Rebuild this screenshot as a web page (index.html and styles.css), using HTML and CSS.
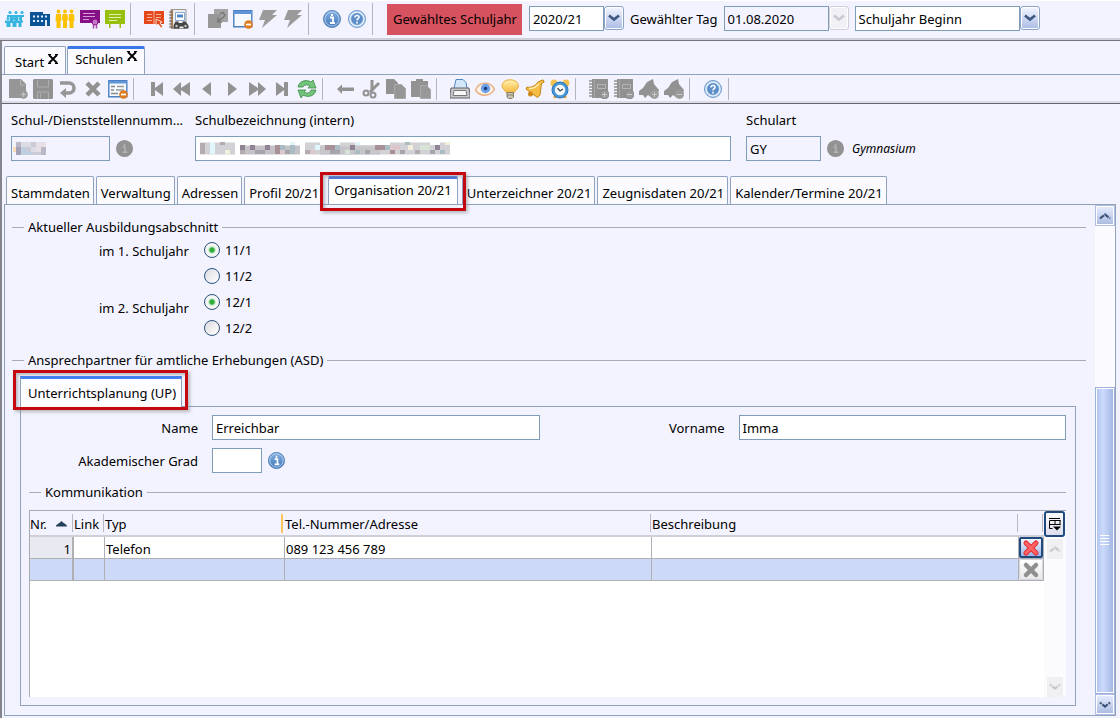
FILE: index.html
```html
<!DOCTYPE html>
<html lang="de">
<head>
<meta charset="utf-8">
<title>Schulen</title>
<link rel="stylesheet" href="styles.css">
</head>
<body>
<svg class="defs" aria-hidden="true">
  <defs>
    <linearGradient id="blue" x1="0" y1="0" x2="0" y2="1"><stop offset="0" stop-color="#86b0e0"/><stop offset="1" stop-color="#3f76b8"/></linearGradient>
    <linearGradient id="gold" x1="0" y1="0" x2="0" y2="1"><stop offset="0" stop-color="#fff3b0"/><stop offset="1" stop-color="#f7b63c"/></linearGradient>
    <symbol id="info" viewBox="0 0 20 20"><circle cx="10" cy="10" r="8.5" fill="url(#blue)" stroke="#5585bd"/><circle cx="10" cy="10" r="7" fill="none" stroke="#c5dbf3" stroke-width=".8"/><path d="M8 8.500h3v5M8 14h5M10 5v2" fill="none" stroke="#fff" stroke-width="1.800"/></symbol>
    <symbol id="help" viewBox="0 0 20 20"><circle cx="10" cy="10" r="8.500" fill="#a9c6e8" stroke="#6d9bd0"/><circle cx="10" cy="10" r="7" fill="none" stroke="#eef5fd" stroke-width="1.200"/><circle cx="10" cy="10" r="5.800" fill="#5c8fca"/><path d="M8 8.500c0-3 4.500-2.500 4 0-.3 1.300-2 1.200-2 3M10 12.800v1.700" fill="none" stroke="#fff" stroke-width="1.600"/></symbol>
    <symbol id="info-gray" viewBox="0 0 20 20"><circle cx="10" cy="10" r="9" fill="#929292"/><path d="M8 8.500h2.500v5M8 14h5M10 5v2" fill="none" stroke="#b5b5b5" stroke-width="1.600"/></symbol>
    <symbol id="people" viewBox="0 0 20 20"><g fill="#35b6e0"><circle cx="5" cy="3.500" r="1.600"/><circle cx="11" cy="3.500" r="1.600"/><circle cx="17" cy="3.500" r="1.600"/><path d="M2 6h17v2h-2v4h-2V8h-2v4h-3V8H8v4H5V8H2z"/><circle cx="3" cy="9.500" r="1.500"/><circle cx="9" cy="9.500" r="1.500"/><circle cx="15" cy="9.500" r="1.500"/><path d="M0 11.500h18v2h-1.500V18h-3v-4h-2v4h-4v-4h-2v4h-4v-4H0z"/></g></symbol>
    <symbol id="school" viewBox="0 0 20 20"><path d="M0 3h13v2h7v12H0z" fill="#0b5596"/><path d="M3 6.500h2v2H3zm4 0h2v2H7zm4 0h2v2h-2zm4 0h2v2h-2zM3 11h2v2H3zm4 0h2v2H7zm4 0h2v2h-2zm4 0h2v6h-2z" fill="#dfeaf5"/></symbol>
    <symbol id="staff" viewBox="0 0 20 20"><g fill="#fcc200"><circle cx="3.500" cy="2.500" r="1.900"/><circle cx="10" cy="2.500" r="1.900"/><circle cx="16.500" cy="2.500" r="1.900"/><path d="M1 5h5l.5 7h-1v7h-4v-7h-1zM7.500 5h5l.5 6h-1v8H8v-8H7zM14 5h5l.5 7h-1v7h-4v-7h-1z"/></g></symbol>
    <symbol id="cert" viewBox="0 0 20 20"><path d="M0 1h20v13H0z" fill="#861086"/><path d="M3 4.500h12M3 7.500h12M3 10.500h6" stroke="#d79bd7"/><circle cx="15" cy="13" r="3" fill="#c877c8" stroke="#861086"/><path d="M13.500 15.500v4M16.500 15.500v4" stroke="#a84aa8" stroke-width="1.500"/></symbol>
    <symbol id="board" viewBox="0 0 20 20"><path d="M0 1h20v14h-4v4h-1.500v-4H5.500v4H4v-4H0z" fill="#97bf0d"/><path d="M4 5.500h12M4 8.500h12M4 11.500h8" stroke="#e4f0b0"/></symbol>
    <symbol id="book" viewBox="0 0 20 20"><path d="M0 2l9 0 1 1 1-1 9 0v13H0z" fill="#e5481b"/><path d="M10 3v12M3 5.500h5M3 8.500h5M3 11.500h5M12 5.500h5M12 8.500h5" stroke="#f6b39d"/><path d="M12 10l6 3-2 1 3 4-2 1-3-4-2 2z" fill="#e5481b" stroke="#fff" stroke-width=".8"/></symbol>
    <symbol id="contacts" viewBox="0 0 20 20"><path d="M2 .5h15v19H2z" fill="#eee" stroke="#999"/><path d="M2 1h2v18H2z" fill="#b98450"/><path d="M0 3h4M0 6h4M0 9h4M0 12h4M0 15h4M0 18h4" stroke="#666"/><path d="M6.500 3.500h9v8h-9z" fill="#fff" stroke="#8aa9d3"/><path d="M8 5.500h6v3H8z" fill="#4d86c8"/><path d="M4.500 19.500v-3l2-4h3v1.500h4v-1.500h3l3 4v3h-5v-2h-4v2z" fill="#444"/><circle cx="7.500" cy="17" r="1.200" fill="#ccc"/><circle cx="16.500" cy="17" r="1.200" fill="#ccc"/></symbol>
    <symbol id="copies" viewBox="0 0 20 20"><path d="M6 0h14v13H6z" fill="#a4a4a4"/><path d="M0 5h13v14H0z" fill="#989898"/><path d="M12 4.500l3-1 2 3-3 3M14 9.500l-5 3M10 8.500v4.500h4" fill="none" stroke="#7c7c7c" stroke-width="1.600"/></symbol>
    <symbol id="window" viewBox="0 0 20 20"><path d="M.8 1.800h18v16H.8z" fill="#f6faff" stroke="#4b80c2" stroke-width="1.400"/><path d="M1 2h18v3H1z" fill="#5f95d6"/><circle cx="15.500" cy="15.500" r="4.300" fill="#e07b1e"/><path d="M13 15.500h5" stroke="#fff" stroke-width="1.800"/></symbol>
    <symbol id="form" viewBox="0 0 20 20"><path d="M.8 1.800h18v16H.8z" fill="#f6faff" stroke="#4b80c2" stroke-width="1.400"/><path d="M1 2h18v2.500H1z" fill="#5f95d6"/><path d="M3 7.500h4M3 11h3M3 14.500h7" stroke="#888" stroke-width="1.300"/><path d="M9 7.500h7M8 11h8" stroke="#999" stroke-width="1.300"/><circle cx="15.500" cy="15.500" r="4.300" fill="#e07b1e"/><path d="M13 15.500h5" stroke="#fff" stroke-width="1.800"/></symbol>
    <symbol id="bolt" viewBox="0 0 20 20"><path d="M5 1h14l-5 5h5L4 19l3-8H1z" fill="#9b9b9b"/></symbol>
    <symbol id="new" viewBox="0 0 20 20"><path d="M1 0h12l5 5v14H1z" fill="#969696"/><path d="M12.500 1v5H17" stroke="#b0b0b0" fill="none"/><circle cx="15.500" cy="15.500" r="4.300" fill="#999"/><path d="M13 15.500h5M15.500 13v5" stroke="#c4c4c4" stroke-width="1.200"/></symbol>
    <symbol id="save" viewBox="0 0 20 20"><path d="M0 1l1-1h18l1 1v18l-1 1H1l-1-1z" fill="#929292"/><path d="M4.500 1v7h11V1M4.500 20v-7h11v7M7.500 14v5" stroke="#aeaeae" fill="none"/></symbol>
    <symbol id="undo" viewBox="0 0 20 20"><path d="M2 4h9a4.500 4.500 0 0 1 0 10H6" fill="none" stroke="#969696" stroke-width="3.600"/><path d="M8 9v10l-6-5z" fill="#969696"/></symbol>
    <symbol id="cross" viewBox="0 0 20 20"><path d="M4 4l12 12M16 4L4 16" stroke="#929292" stroke-width="4.500"/></symbol>
    <symbol id="first" viewBox="0 0 20 20"><path d="M4 3h4v6l8-6v14l-8-6v6H4z" fill="#929292"/></symbol>
    <symbol id="rew" viewBox="0 0 20 20"><path d="M1 10l8-7v6l9-6v14l-9-6v6z" fill="#929292"/></symbol>
    <symbol id="prev" viewBox="0 0 20 20"><path d="M5 10l9-7v14z" fill="#929292"/></symbol>
    <symbol id="next" viewBox="0 0 20 20"><path d="M15 10L6 3v14z" fill="#929292"/></symbol>
    <symbol id="ffw" viewBox="0 0 20 20"><path d="M19 10l-8-7v6L2 3v14l9-6v6z" fill="#929292"/></symbol>
    <symbol id="last" viewBox="0 0 20 20"><path d="M16 3h-4v6L4 3v14l8-6v6h4z" fill="#929292"/></symbol>
    <symbol id="refresh" viewBox="0 0 20 20"><path d="M1 8c1-6 8-8 13-5l2-2 3 8h-8l2-2c-3-2-6-1-7 1zM19 11c-1 6-8 8-13 5l-2 3-3-8h8l-2 2c3 2 6 1 7-2z" fill="#74c47b" stroke="#3c8c46" stroke-width=".8"/></symbol>
    <symbol id="left" viewBox="0 0 20 20"><path d="M1 10l5-4.500v3h12v3.500H6v3z" fill="#929292"/></symbol>
    <symbol id="cut" viewBox="0 0 20 20"><path d="M11 1v10M18 4l-9 9" stroke="#929292" stroke-width="3"/><circle cx="5" cy="14" r="2.500" fill="none" stroke="#929292" stroke-width="2"/><circle cx="12" cy="16" r="2.500" fill="none" stroke="#929292" stroke-width="2"/></symbol>
    <symbol id="copy" viewBox="0 0 20 20"><path d="M0 0h8l4 4v11H0z" fill="#929292"/><path d="M8.500 5.500h7l4 4v10h-11z" fill="#969696" stroke="#aaa"/></symbol>
    <symbol id="paste" viewBox="0 0 20 20"><path d="M0 2h5V0h7v2h5v16H0z" fill="#929292"/><path d="M9.500 6.500h6l4 4v9h-10z" fill="#989898" stroke="#aaa"/></symbol>
    <symbol id="print" viewBox="0 0 20 20"><path d="M4 9.500L6 .5h7l3 3 1 6z" fill="#d3e8fb" stroke="#4f86c2"/><path d="M1 9h18l1 7v3H0v-3z" fill="#c9c9cd" stroke="#606064"/><path d="M4 11.500h12l1 5H3z" fill="#f7f7f7" stroke="#777"/></symbol>
    <symbol id="eye" viewBox="0 0 20 20"><path d="M.5 11C4 2.500 15 2 19.500 10c-4 8-15 8-19 1z" fill="#fdf2e8" stroke="#e8b387" stroke-width="1.600"/><circle cx="10.500" cy="9.500" r="4.700" fill="#6f9fe4"/><circle cx="10.500" cy="9.500" r="1.800" fill="#173c86"/></symbol>
    <symbol id="bulb" viewBox="0 0 20 20"><path d="M10 .8c5 0 8.500 2.700 8.500 6 0 3.200-3 4-4.500 7H6.500c-1.500-3-4.500-3.800-4.500-7 0-3.300 3-6 8-6z" fill="url(#gold)" stroke="#eba83a"/><path d="M7 13.500h6.500v4.500l-1.500 1.500H8.500L7 18z" fill="#cbc6b4" stroke="#827c68"/><path d="M7 16h6.500" stroke="#827c68"/></symbol>
    <symbol id="bell" viewBox="0 0 20 20"><path d="M18 .8l1.200 2.200-2.700 1.500-1.500 11.500-2.500 2.500L1 10l1-2c4 1 8-1 11-5z" fill="#f5bd45" stroke="#c08415"/><circle cx="5.500" cy="15" r="2.500" fill="#d18a17"/><path d="M4 9.500c4 0 8-2 10-5" fill="none" stroke="#ffe9a4" stroke-width="1.500"/></symbol>
    <symbol id="alarm" viewBox="0 0 20 20"><circle cx="4" cy="4" r="3.500" fill="#f2c14e"/><circle cx="16" cy="4" r="3.500" fill="#f2c14e"/><path d="M4 19l3-4M16 19l-3-4" stroke="#e3a733" stroke-width="2.500"/><circle cx="10" cy="11" r="8" fill="#4a97d8" stroke="#2d74b8"/><circle cx="10" cy="11" r="5.200" fill="#f7fbff"/><path d="M10 12l-2.500-3M10 12l3-2" stroke="#444" stroke-width="1.200"/></symbol>
    <symbol id="note" viewBox="0 0 20 20"><path d="M3 0h16v19H3z" fill="#929292"/><path d="M0 2h4M0 5h4M0 8h4M0 11h4M0 14h4M0 17h4" stroke="#929292" stroke-width="1.600"/><path d="M8.500 5.500h8v4h-8z" stroke="#b4b4b4" fill="none"/><path d="M5.500 0v19" stroke="#a6a6a6"/></symbol>
    <symbol id="note-add" viewBox="0 0 20 20"><use href="#note"/><circle cx="15.500" cy="15.500" r="4.500" fill="#999" stroke="#888"/><path d="M13 15.500h5M15.500 13v5" stroke="#ccc"/></symbol>
    <symbol id="note-del" viewBox="0 0 20 20"><use href="#note"/><circle cx="15.500" cy="15.500" r="4.500" fill="#999" stroke="#888"/><path d="M13 15.500h5" stroke="#ccc"/></symbol>
    <symbol id="tag" viewBox="0 0 20 20"><path d="M8 3l6-3 1 5 5 6-2 8h-5l-4-3-3 3-2-3H0v-4l4-3z" fill="#929292"/><circle cx="15.500" cy="15.500" r="4" fill="#989898" stroke="#a4a4a4"/></symbol>
    <symbol id="tag-add" viewBox="0 0 20 20"><use href="#tag"/><path d="M13 15.500h5M15.500 13v5" stroke="#ccc"/></symbol>
    <symbol id="tag-del" viewBox="0 0 20 20"><use href="#tag"/><path d="M13 15.500h5" stroke="#ccc"/></symbol>
    <symbol id="chev" viewBox="0 0 12 8"><path d="M1 1.500L6 5.500l5-4" fill="none" stroke="currentColor" stroke-width="2.800"/></symbol>
    <symbol id="chev-up" viewBox="0 0 12 8"><path d="M1 6.500l5-4 5 4" fill="none" stroke="currentColor" stroke-width="2.200" stroke-dasharray="5 1"/></symbol>
    <symbol id="chev-down" viewBox="0 0 12 8"><path d="M1 1.500l5 4 5-4" fill="none" stroke="currentColor" stroke-width="2.200" stroke-dasharray="2 1 7 1"/></symbol>
  </defs>
</svg>

<header class="bar topbar">
  <div class="tools">
    <button class="tool" aria-label="Schüler"><svg><use href="#people"/></svg></button>
    <button class="tool" aria-label="Schulen"><svg><use href="#school"/></svg></button>
    <button class="tool" aria-label="Lehrkräfte"><svg><use href="#staff"/></svg></button>
    <button class="tool" aria-label="Zeugnisse"><svg><use href="#cert"/></svg></button>
    <button class="tool" aria-label="Unterricht"><svg><use href="#board"/></svg></button>
    <span class="sep"></span>
    <button class="tool" aria-label="Katalog"><svg><use href="#book"/></svg></button>
    <button class="tool" aria-label="Suche"><svg><use href="#contacts"/></svg></button>
    <span class="sep"></span>
    <button class="tool" aria-label="Fenster anordnen"><svg><use href="#copies"/></svg></button>
    <button class="tool" aria-label="Fenster schließen"><svg><use href="#window"/></svg></button>
    <button class="tool" aria-label="Aktion 1"><svg><use href="#bolt"/></svg></button>
    <button class="tool" aria-label="Aktion 2"><svg><use href="#bolt"/></svg></button>
    <span class="sep"></span>
    <button class="tool" aria-label="Info"><svg><use href="#info"/></svg></button>
    <button class="tool" aria-label="Hilfe"><svg><use href="#help"/></svg></button>
    <span class="sep"></span>
  </div>
  <label class="year-label" for="year">Gewähltes Schuljahr</label>
  <div class="combo combo-year">
    <select id="year"><option>2020/21</option></select>
    <span class="drop"><svg><use href="#chev"/></svg></span>
  </div>
  <label class="day-label" for="day">Gewählter Tag</label>
  <div class="combo combo-day">
    <input id="day" type="text" value="01.08.2020" readonly>
    <button class="drop drop-off" aria-label="Datum wählen" disabled><svg><use href="#chev"/></svg></button>
  </div>
  <div class="combo combo-start">
    <select aria-label="Stichtag"><option>Schuljahr Beginn</option></select>
    <span class="drop"><svg><use href="#chev"/></svg></span>
  </div>
</header>

<main class="frame">
  <nav class="doc-tabs">
    <div class="doc-tab"><button class="tab-name">Start</button><button class="close" aria-label="Start schließen"><svg viewBox="0 0 12 12"><path d="M2 2l8 8M10 2l-8 8" stroke="#000" stroke-width="1.800"/><path d="M1 1.500h3M8 1.500h3M1 10.500h3M8 10.500h3" stroke="#000"/></svg></button></div>
    <div class="doc-tab doc-tab-on"><button class="tab-name">Schulen</button><button class="close" aria-label="Schulen schließen"><svg viewBox="0 0 12 12"><path d="M2 2l8 8M10 2l-8 8" stroke="#000" stroke-width="1.800"/><path d="M1 1.500h3M8 1.500h3M1 10.500h3M8 10.500h3" stroke="#000"/></svg></button></div>
  </nav>

  <div class="bar subbar">
    <button class="tool" aria-label="Neu"><svg><use href="#new"/></svg></button>
    <button class="tool" aria-label="Speichern"><svg><use href="#save"/></svg></button>
    <button class="tool" aria-label="Rückgängig"><svg><use href="#undo"/></svg></button>
    <button class="tool" aria-label="Löschen"><svg><use href="#cross"/></svg></button>
    <button class="tool" aria-label="Maske schließen"><svg><use href="#form"/></svg></button>
    <span class="sep"></span>
    <button class="tool" aria-label="Erster"><svg><use href="#first"/></svg></button>
    <button class="tool" aria-label="Seite zurück"><svg><use href="#rew"/></svg></button>
    <button class="tool" aria-label="Zurück"><svg><use href="#prev"/></svg></button>
    <button class="tool" aria-label="Weiter"><svg><use href="#next"/></svg></button>
    <button class="tool" aria-label="Seite vor"><svg><use href="#ffw"/></svg></button>
    <button class="tool" aria-label="Letzter"><svg><use href="#last"/></svg></button>
    <button class="tool" aria-label="Aktualisieren"><svg><use href="#refresh"/></svg></button>
    <span class="sep"></span>
    <button class="tool" aria-label="Zurückgehen"><svg><use href="#left"/></svg></button>
    <button class="tool" aria-label="Ausschneiden"><svg><use href="#cut"/></svg></button>
    <button class="tool" aria-label="Kopieren"><svg><use href="#copy"/></svg></button>
    <button class="tool" aria-label="Einfügen"><svg><use href="#paste"/></svg></button>
    <span class="sep"></span>
    <button class="tool" aria-label="Drucken"><svg><use href="#print"/></svg></button>
    <button class="tool" aria-label="Ansicht"><svg><use href="#eye"/></svg></button>
    <button class="tool" aria-label="Hinweis"><svg><use href="#bulb"/></svg></button>
    <button class="tool" aria-label="Erinnerung"><svg><use href="#bell"/></svg></button>
    <button class="tool" aria-label="Wiedervorlage"><svg><use href="#alarm"/></svg></button>
    <span class="sep"></span>
    <button class="tool" aria-label="Notiz anlegen"><svg><use href="#note-add"/></svg></button>
    <button class="tool" aria-label="Notiz entfernen"><svg><use href="#note-del"/></svg></button>
    <button class="tool" aria-label="Markierung anlegen"><svg><use href="#tag-add"/></svg></button>
    <button class="tool" aria-label="Markierung entfernen"><svg><use href="#tag-del"/></svg></button>
    <span class="sep"></span>
    <button class="tool" aria-label="Hilfe zur Maske"><svg><use href="#help"/></svg></button>
    <span class="sep"></span>
  </div>

  <section class="record">
    <div class="head-cell">
      <label class="head-label" for="nr">Schul-/Dienststellennumm...</label>
      <div class="head-row">
        <div class="masked masked-nr">
          <input id="nr" class="field field-off" type="text" readonly>
          <svg class="mosaic" width="34" height="13" viewBox="0 0 34 13"><path fill="#fbdcb8" d="M0 5h3v5H0z"/><path fill="#b9b7c8" d="M3 0h5v5H3zM28 5h5v8h-5z"/><path fill="#a5a2b5" d="M3 5h5v8H3z"/><path fill="#dcdce4" d="M8 0h10v5H8zM18 5h5v5h-5z"/><path fill="#bdd0e2" d="M8 5h5v8H8zM13 10h5v3h-5z"/><path fill="#c9cbd9" d="M13 5h5v5h-5zM18 0h5v5h-5zM18 10h10v3H18z"/><path fill="#e6dfe6" d="M23 0h5v10h-5zM28 0h5v5h-5z"/></svg>
        </div>
        <svg class="round"><use href="#info-gray"/></svg>
      </div>
    </div>
    <div class="head-cell">
      <label class="head-label" for="name-intern">Schulbezeichnung (intern)</label>
      <div class="masked">
        <input id="name-intern" class="field" type="text">
        <svg class="mosaic" width="250" height="13" viewBox="0 0 250 13">
          <path stroke="#d2d1d5" stroke-width="12" d="M0 6.500h35M105 6.500h145"/><path stroke="#c6c6ca" stroke-width="8" d="M120 8.500h60"/>
          <path stroke="#c4c2c6" stroke-width="9" d="M40 8h60"/>
          <path fill="#fff" d="M120 0h20v3h-20zM160 0h30v3h-30zM230 0h10v3h-10z"/>
          <path fill="#b3abb0" d="M0 1h5v11H0zM20 0h5v3h-5zM40 8h5v4h-5zM105 8h5v4h-5zM215 8h5v4h-5z"/>
          <path fill="#8f8494" d="M40 3h5v5h-5zM50 3h5v5h-5zM65 3h5v5h-5zM150 3h5v5h-5zM235 3h5v5h-5z"/>
          <path fill="#a79098" d="M75 3h5v9h-5zM125 3h10v5h-10zM175 3h10v5h-10zM190 8h5v4h-5z"/>
          <path fill="#dcc7cc" d="M10 3h5v5h-5zM60 8h5v4h-5zM80 8h5v4h-5zM190 3h10v5h-10zM110 8h5v4h-5z"/>
          <path fill="#e0f6fb" d="M10 0h5v12h-5zM115 3h5v5h-5zM155 0h5v3h-5zM90 0h5v3h-5z"/>
          <path fill="#a9bcc4" d="M80 3h5v5h-5zM90 3h5v9h-5zM135 3h5v5h-5zM155 8h5v4h-5zM185 3h5v5h-5zM205 0h5v3h-5zM240 8h5v4h-5z"/>
          <path fill="#d7e3d5" d="M145 8h5v4h-5zM220 3h10v5h-10z"/>
          <path fill="#f3efdf" d="M25 8h5v4h-5zM208 3h5v5h-5zM245 0h5v3h-5z"/>
          <path fill="#a6a3aa" d="M55 8h10v4H55zM85 8h5v4h-5zM130 8h10v4h-10zM165 8h5v4h-5zM200 8h5v4h-5zM230 8h5v4h-5z"/>
        </svg>
      </div>
    </div>
    <div class="head-cell">
      <label class="head-label" for="type">Schulart</label>
      <div class="head-row">
        <input id="type" class="field field-off field-type" type="text" value="GY" readonly>
        <svg class="round"><use href="#info-gray"/></svg>
        <em>Gymnasium</em>
      </div>
    </div>
  </section>

  <nav class="tabs">
    <button class="tab">Stammdaten</button>
    <button class="tab">Verwaltung</button>
    <button class="tab">Adressen</button>
    <button class="tab">Profil 20/21</button>
    <div class="mark"><button class="tab tab-on">Organisation 20/21</button></div>
    <button class="tab">Unterzeichner 20/21</button>
    <button class="tab">Zeugnisdaten 20/21</button>
    <button class="tab">Kalender/Termine 20/21</button>
  </nav>

  <div class="panel">
    <div class="content">
      <fieldset class="group">
        <legend>Aktueller Ausbildungsabschnitt</legend>
        <div class="years">
          <span class="years-label">im 1. Schuljahr</span>
          <div class="radios">
            <label><input type="radio" name="jahr1" checked>11/1</label>
            <label><input type="radio" name="jahr1">11/2</label>
          </div>
          <span class="years-label years-label-low">im 2. Schuljahr</span>
          <div class="radios">
            <label><input type="radio" name="jahr2" checked>12/1</label>
            <label><input type="radio" name="jahr2">12/2</label>
          </div>
        </div>
      </fieldset>

      <fieldset class="group section-contact">
        <legend>Ansprechpartner für amtliche Erhebungen (ASD)</legend>
        <div class="inner-tabs"><div class="mark mark-inner"><button class="inner-tab">Unterrichtsplanung (UP)</button></div></div>
        <div class="card">
          <div class="form">
            <label for="ln">Name</label>
            <input id="ln" class="field" type="text" value="Erreichbar">
            <label for="fn">Vorname</label>
            <input id="fn" class="field" type="text" value="Imma">
            <label for="grad">Akademischer Grad</label>
            <div class="grad"><input id="grad" class="field field-grad" type="text"><svg class="round"><use href="#info"/></svg></div>
          </div>
          <fieldset class="group section-comm">
            <legend>Kommunikation</legend>
            <div class="grid-box">
              <div class="grid-main">
                <table>
                  <colgroup><col class="c-nr"><col class="c-link"><col class="c-typ"><col><col><col class="c-del"></colgroup>
                  <thead>
                    <tr><th>Nr.<svg class="sort" viewBox="0 0 11 6"><path d="M0 5.500C0 3.500 2 3.500 5.500 0 9 3.500 11 3.500 11 5.500z" fill="#26415a"/></svg></th><th>Link</th><th class="drop-mark">Typ</th><th>Tel.-Nummer/Adresse</th><th>Beschreibung</th><th></th></tr>
                  </thead>
                  <tbody>
                    <tr><td class="nr">1</td><td></td><td>Telefon</td><td>089 123 456 789</td><td></td><td class="del"><button class="del-on" aria-label="Zeile löschen"><svg viewBox="0 0 18 18"><path d="M4 4l10 10M14 4L4 14" stroke="#e22b30" stroke-width="5" stroke-linecap="round"/><path d="M4 4l10 10M14 4L4 14" stroke="#ff6464" stroke-width="3" stroke-linecap="round"/></svg></button></td></tr>
                    <tr class="picked"><td class="nr"></td><td></td><td></td><td></td><td></td><td class="del"><button class="del-off" aria-label="Leere Zeile löschen" disabled><svg viewBox="0 0 18 18"><path d="M4 4l10 10M14 4L4 14" stroke="#8f8f8f" stroke-width="4.500" stroke-linecap="round"/></svg></button></td></tr>
                  </tbody>
                </table>
              </div>
              <div class="grid-side">
                <button class="columns" aria-label="Spalten wählen"><svg viewBox="0 0 14 14"><path d="M1 1.500h11M1.500 4v7.500h3M1.500 3.500h11M1.500 7.500h11M7 3v5M12 3v5" stroke="#000" fill="none"/><path d="M5 9.500h8l-4 4z"/></svg></button>
                <span class="mini"><svg><use href="#chev-up"/></svg></span>
                <span class="mini mini-end"><svg><use href="#chev-down"/></svg></span>
              </div>
            </div>
          </fieldset>
        </div>
      </fieldset>
    </div>
    <div class="scroll">
      <button class="scroll-btn" aria-label="Nach oben"><svg><use href="#chev-up"/></svg></button>
      <span class="scroll-track"></span>
      <span class="scroll-thumb"><svg viewBox="0 0 10 11"><path d="M0 .5h9M0 3.500h9M0 6.500h9M0 9.500h9" stroke="#fff"/></svg></span>
      <button class="scroll-btn" aria-label="Nach unten"><svg><use href="#chev-down"/></svg></button>
    </div>
  </div>
</main>
</body>
</html>
```

FILE: styles.css
```css
* { box-sizing: border-box; }

body {
  display: flex;
  flex-direction: column;
  min-height: 100vh;
  margin: 0;
  background: #f3f3ff;
  color: #000;
  font: 13px/18px "Noto Sans", "Open Sans", sans-serif;
}

button, input, select { font: inherit; color: inherit; margin: 0; }
button { padding: 0; border: 0; background: none; }
.defs { position: absolute; width: 0; height: 0; }

/* Toolbars */
.bar { display: flex; align-items: center; }
.topbar {
  height: 41px;
  padding: 0 0 3px 2px;
  border-top: 1px solid #fff;
  border-bottom: 1px solid #75757d;
  box-shadow: inset 0 -2px #cfcfda;
}
.tools { display: flex; align-items: center; }
.tool { display: grid; place-items: center; flex: none; width: 25px; height: 24px; }
.tool svg { width: 20px; height: 20px; }
.sep { flex: none; width: 1px; margin: 0 10px 0 3px; background: #b4b4bd; }
.topbar .sep { height: 32px; }
.subbar {
  height: 29px;
  padding-left: 3px;
  border-bottom: 1px solid #64646c;
  box-shadow: inset 0 -2px #dcdce8;
}
.subbar .sep { height: 22px; }

.year-label {
  margin-left: 4px;
  padding: 6px 5px 7px 6px;
  background: #d6525e;
  white-space: nowrap;
}
.combo { display: flex; height: 26px; }
.combo select, .combo input {
  flex: 1;
  min-width: 0;
  height: 25px;
  padding: 0 3px;
  border: 1px solid #7f9db9;
  border-radius: 0;
  background: #fff;
  appearance: none;
}
.combo input { background: #f3f3ff; }
.combo-year { width: 95px; margin-left: 7px; }
.combo-day { width: 125px; margin-left: 6px; }
.combo-start { width: 185px; margin-left: 6px; }
.day-label { margin-left: 6px; white-space: nowrap; }
.drop {
  display: grid;
  place-items: center;
  width: 20px;
  height: 24px;
  border: 1px solid #8ba2c6;
  border-radius: 3px;
  background: linear-gradient(#f4f7ff, #a9bbe6);
  box-shadow: inset 0 0 0 1px #fff;
  color: #3f5a80;
}
.drop svg { width: 12px; height: 8px; }
.drop-off { border-color: #cfcfdc; background: #f0f0f5; color: #c9c9d4; }

/* Document frame */
.frame {
  display: flex;
  flex: 1;
  flex-direction: column;
  border-left: 2px solid #85858f;
}
.doc-tabs {
  display: flex;
  gap: 1px;
  align-items: flex-end;
  height: 34px;
  padding-left: 2px;
  border-bottom: 1px solid #8fa3bf;
}
.doc-tab {
  display: flex;
  align-items: center;
  gap: 3px;
  height: 28px;
  padding: 2px 6px 0 10px;
  border: 1px solid #8fa3bf;
  border-bottom: 0;
  border-radius: 2px 2px 0 0;
  background: #fbfbff;
}
.doc-tab-on {
  padding: 0 6px 6px 7px;
  border-top: 3px solid #3a76e8;
}
.close { display: grid; width: 12px; height: 18px; }
.close svg { width: 12px; height: 12px; }

/* Record header */
.record {
  display: grid;
  grid-template-columns: 169px minmax(0, 536px) 1fr;
  gap: 15px;
  padding: 7px 9px 15px;
}
.head-cell { display: flex; flex-direction: column; gap: 7px; min-width: 0; }
.head-label { white-space: nowrap; }
.head-row { display: flex; align-items: center; gap: 5px; }
.field {
  width: 100%;
  height: 25px;
  padding: 0 3px;
  border: 1px solid #7f9db9;
  border-radius: 0;
  background: #fff;
  outline: 0;
}
.field-off { background: #f3f3ff; }
.field-type { width: 75px; }
.masked { position: relative; }
.masked-nr { width: 99px; }
.masked input { display: block; }
.mosaic { position: absolute; top: 6px; left: 5px; }
.masked-nr .mosaic { left: 2px; }
.round { flex: none; width: 19px; height: 19px; }
.head-row em { margin-left: 2px; font-size: 12px; }

/* Record tabs */
.tabs { display: flex; gap: 2px; align-items: flex-end; padding-left: 4px; }
.tab {
  height: 28px;
  padding: 4px 3px 0 4px;
  border: 1px solid #8fa3bf;
  border-bottom: 0;
  border-radius: 2px 2px 0 0;
  background: #fbfbff;
  white-space: nowrap;
}
.tab-on {
  padding: 0 5px 4px;
  border-top: 3px solid #4a76dc;
  background: #fff;
}
.mark { position: relative; margin: 0 2px 0 3px; }
.mark::after {
  content: "";
  position: absolute;
  inset: -4px -8px -7px;
  border: 3px solid #c40812;
  box-shadow: 2px 2px 3px #8888, inset 2px 2px 3px #8888;
  pointer-events: none;
}

/* Main panel */
.panel {
  display: flex;
  flex: 1;
  margin: 0 4px 2px 2px;
  border: 1px solid #8fa3bf;
}
.content { display: flex; flex: 1; flex-direction: column; min-width: 0; padding: 13px 9px 9px 7px; }
.group { min-width: 0; margin: 0; padding: 0; border: 0; border-top: 1px solid #a9a9b8; }
.group legend { margin-left: 12px; padding: 0 4px; }
.years { display: grid; grid-template-columns: 177px 1fr; column-gap: 15px; padding-top: 1px; }
.years-label { padding-top: 5px; text-align: right; }
.years-label-low { padding-top: 10px; }
.radios label { display: flex; align-items: center; gap: 5px; width: max-content; height: 26px; }
.radios input {
  width: 16px;
  height: 16px;
  border: 1px solid #2b5480;
  border-radius: 50%;
  background: linear-gradient(135deg, #dcdce0, #fff);
  appearance: none;
}
.radios input:checked { background: radial-gradient(circle, #2fae3a 0 2px, #9fdca2 3px, #f4f6f4 4px); }

.section-contact { display: flex; flex: 1; flex-direction: column; margin-top: 10px; }
.inner-tabs { display: flex; padding-left: 8px; margin-top: 7px; }
.mark-inner { margin: 0; }
.mark-inner::after { inset: -6px -6px -4px -7px; }
.inner-tab {
  position: relative;
  height: 31px;
  margin-bottom: -1px;
  padding: 0 5px 0 7px;
  border: 1px solid #8fa3bf;
  border-top: 3px solid #4080f4;
  border-bottom: 0;
  background: #fdfdff;
}
.card {
  display: flex;
  flex: 1;
  flex-direction: column;
  margin: 0 10px 0 8px;
  padding: 8px 9px 8px 8px;
  border: 1px solid #8fa3bf;
}
.form {
  display: grid;
  grid-template-columns: 169px 1fr 171px 1fr;
  gap: 8px 14px;
  align-items: center;
}
.form > label { text-align: right; }
.grad { display: flex; align-items: center; gap: 5px; }
.field-grad { width: 50px; }
.section-comm { display: flex; flex: 1; flex-direction: column; margin-top: 10px; }

/* Communication table */
.grid-box {
  display: flex;
  flex: 1;
  margin-top: 9px;
  border-top: 1px solid #a9a9b0;
  border-left: 1px solid #a9a9b0;
  background: #fff;
}
.grid-main { flex: 1; min-width: 0; }
table { width: 100%; table-layout: fixed; border-collapse: separate; border-spacing: 0; }
.c-nr { width: 44px; }
.c-link { width: 31px; }
.c-typ { width: 180px; }
.c-del { width: 25px; }
th {
  height: 26px;
  padding: 2px 0 0;
  border-bottom: 2px solid #cfcfd8;
  background: linear-gradient(#b9b9c4, #b9b9c4) right 1px center / 1px 18px no-repeat #f3f3ff;
  font-weight: 400;
  text-align: left;
  white-space: nowrap;
}
.drop-mark { background: linear-gradient(#fcc65c, #fcc65c) right 2px center / 2px 19px no-repeat #f3f3ff; }
.sort { width: 11px; height: 6px; margin: 0 0 2px 9px; }
td {
  height: 22px;
  padding: 2px 1px 0;
  border-right: 1px solid #b0b0b4;
  border-bottom: 1px solid #b0b0b4;
  line-height: 18px;
}
.nr { border-right-width: 2px; background: #e9e9f2; text-align: right; }
.picked td { background: #ccdaf7; }
.picked .del, .del { padding: 0; background: #f3f3ff; }
.del button { display: grid; place-items: center; width: 24px; height: 21px; border-radius: 2px; }
.del svg { width: 18px; height: 18px; }
.del-on { border: 2px solid #1f4a7d; background: linear-gradient(#f4f7ff, #9cb3e6); }
.del-off { border: 1px solid #d5d5dd; background: linear-gradient(#fff, #e8e8ec); }
.grid-side { display: flex; flex-direction: column; width: 22px; padding-right: 1px; background: #fbfbfd; }
.columns {
  display: grid;
  place-items: center;
  height: 26px;
  border: 2px solid #1f4a7d;
  border-radius: 3px;
  background: linear-gradient(#fff, #dcdcec);
}
.columns svg { width: 14px; height: 14px; }
.mini { display: grid; place-items: center; width: 16px; height: 20px; margin: 2px 0 0 3px; background: #f0f0f3; color: #c6c6cc; }
.mini svg { width: 12px; height: 8px; }
.mini-end { margin-top: auto; }

/* Main scrollbar */
.scroll { display: flex; flex-direction: column; width: 20px; background: #fbfbff; }
.scroll-btn {
  display: grid;
  place-items: center;
  height: 21px;
  border: 1px solid #aebfe2;
  background: linear-gradient(#e8eeff, #a9badf);
  box-shadow: inset 0 0 0 1px #fff;
  color: #3a5478;
}
.scroll-btn svg { width: 12px; height: 8px; }
.scroll-track { flex: 161; }
.scroll-thumb {
  display: grid;
  flex: 306;
  place-items: center;
  border: 1px solid #9db2dd;
  background: linear-gradient(90deg, #b0c2f0, #ccdafc 40%, #9fb4e0);
  box-shadow: inset 0 0 0 1px #fff;
}
.scroll-thumb svg { width: 10px; height: 11px; }
```
